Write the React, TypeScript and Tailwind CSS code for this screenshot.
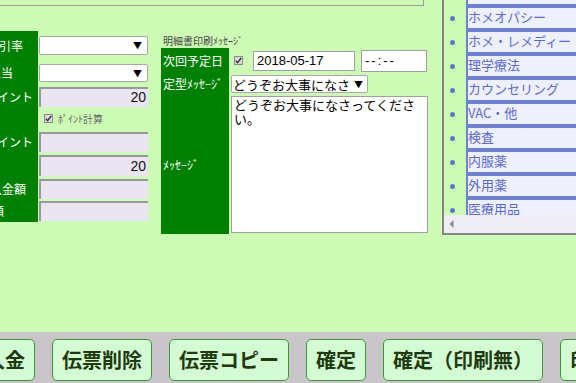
import React from 'react';

const jp = "font-['Noto_Sans_CJK_JP',sans-serif]";
const latin = "font-['Liberation_Sans','Noto_Sans_CJK_JP',sans-serif]";

function Check() {
  return (
    <span className="w-[9px] h-[9px] border border-[#8c8c8c] bg-[#d8d8d8] flex items-center justify-center shrink-0">
      <svg width="7" height="7" viewBox="0 0 7 7">
        <path d="M0.8 3.6 L2.6 5.6 L6.2 1" fill="none" stroke="#333" strokeWidth="1.4" />
      </svg>
    </span>
  );
}

function Select({ h }: { h: string }) {
  return (
    <div className={`${h} w-full bg-white border border-[#a8a8a8] rounded-[2px] flex items-center justify-end pr-[5px]`}>
      <span className="text-[9px] text-black leading-none">▼</span>
    </div>
  );
}

function Field({ h, value }: { h: string; value?: string }) {
  return (
    <div className={`${h} w-full bg-[#ebe4f2] border-t-2 border-l-2 border-[#999] flex items-center justify-end pr-[2px] text-[14px] text-[#111] ${latin}`}>
      {value}
    </div>
  );
}

function LeftRow({ h, label, pr, children }: { h: string; label?: string; pr?: string; children: React.ReactNode }) {
  return (
    <div className={`${h} flex`}>
      <div className={`w-[60px] bg-[#008000] flex items-center justify-end whitespace-nowrap overflow-hidden text-[12px] text-white ${pr ?? ''}`}>
        {label}
      </div>
      <div className="w-[109px] ml-[1px] flex items-center">{children}</div>
    </div>
  );
}

function LeftForm() {
  return (
    <div className="mt-[25px] -ml-[22px] flex flex-col">
      <LeftRow h="h-[29px]" label="割引率" pr="pr-[15px]"><Select h="h-[19px]" /></LeftRow>
      <LeftRow h="h-[26px]" label="担当" pr="pr-[25px]"><Select h="h-[18px]" /></LeftRow>
      <LeftRow h="h-[21px]" label="ポイント" pr="pr-[5px]"><Field h="h-[20px]" value="20" /></LeftRow>
      <LeftRow h="h-[23px]">
        <div className="flex items-center ml-[5px] gap-[5px]">
          <Check />
          <span className="text-[10px] text-[#666]">ﾎﾟｲﾝﾄ計算</span>
        </div>
      </LeftRow>
      <LeftRow h="h-[23px]" label="ポイント" pr="pr-[5px]"><Field h="h-[20px]" /></LeftRow>
      <LeftRow h="h-[24px]"><Field h="h-[21px]" value="20" /></LeftRow>
      <LeftRow h="h-[23px]" label="入金額" pr="pr-[12px]"><Field h="h-[20px]" /></LeftRow>
      <LeftRow h="h-[22px]" label="残額" pr="pr-[34px]"><Field h="h-[20px]" /></LeftRow>
    </div>
  );
}

function MidRow({ h, label, children }: { h: string; label?: string; children: React.ReactNode }) {
  return (
    <div className={`${h} flex`}>
      <div className="w-[68px] bg-[#008000] flex items-center pl-[2px] text-[12px] text-white whitespace-nowrap">{label}</div>
      <div className="flex-1 ml-[2px] flex items-center">{children}</div>
    </div>
  );
}

function MiddleForm() {
  return (
    <div className="ml-[13px] mt-[27px] w-[267px] flex flex-col">
      <div className="h-[15px] leading-[15px] pl-[2px] text-[10px] text-[#444]">明細書印刷ﾒｯｾｰｼﾞ</div>
      <MidRow h="h-[25px]" label="次回予定日">
        <div className="ml-[3px]"><Check /></div>
        <div className={`ml-[10px] w-[102px] h-[20px] bg-white border border-[#a0a0a0] flex items-center pl-[3px] text-[13px] text-black ${latin}`}>2018-05-17</div>
        <div className={`ml-[6px] w-[66px] h-[22px] bg-white border border-[#a0a0a0] flex items-center pl-[3px] text-[13px] tracking-[2px] text-black ${latin}`}>--:--</div>
      </MidRow>
      <MidRow h="h-[22px]" label="定型ﾒｯｾｰｼﾞ">
        <div className="w-[137px] h-[18px] bg-white border border-[#a8a8a8] rounded-[2px] flex items-center pl-[1px] pr-[4px]">
          <span className="w-[118px] overflow-hidden whitespace-nowrap text-[13px] leading-none text-black">どうぞお大事になさってください。</span>
          <span className="text-[9px] leading-none text-black ml-auto">▼</span>
        </div>
      </MidRow>
      <MidRow h="h-[139px]" label="ﾒｯｾｰｼﾞ">
        <div className="w-[197px] h-[137px] bg-white border border-[#a0a0a0] px-[2px] pt-[1px] text-[13px] leading-[14px] text-black break-all">
          どうぞお大事になさってください。
        </div>
      </MidRow>
    </div>
  );
}

const items = ['ホメオパシー', 'ホメ・レメディー', '理学療法', 'カウンセリング', 'VAC・他', '検査', '内服薬', '外用薬', '医療用品'];

function RightPanel() {
  return (
    <div className="flex-1 h-[235px] border-l-2 border-b-2 border-[#8a8484] flex flex-col">
      <div className="h-[215px] overflow-hidden flex flex-col">
        <div className="h-[4px] flex shrink-0">
          <div className="w-[22px]" />
          <div className="flex-1 border-l-2 border-[#6b82d6] bg-[#eef0fc]" />
        </div>
        {items.map((t) => (
          <div key={t} className="h-[24px] flex shrink-0">
            <div className="w-[22px] pt-[4px] flex items-center pl-[6px]">
              <span className="w-[5px] h-[5px] rounded-full bg-[#5b78d2]" />
            </div>
            <div className="flex-1 border-l-2 border-t-4 border-[#6b82d6] bg-[#eef0fc] text-[13px] leading-[18px] text-[#5b6ad2] whitespace-nowrap">
              {t}
            </div>
          </div>
        ))}
      </div>
      <div className="h-[18px] bg-[#eeedf3] flex items-center pl-[5px]">
        <svg width="5" height="8" viewBox="0 0 5 8">
          <path d="M4.5 0 L0.5 4 L4.5 8 Z" fill="#8a8a8a" />
        </svg>
      </div>
    </div>
  );
}

const buttons = ['入金', '伝票削除', '伝票コピー', '確定', '確定（印刷無）', '印刷'];

export default function App() {
  return (
    <div className={`w-[576px] h-[383px] overflow-hidden bg-[#cdfab4] flex flex-col ${jp}`}>
      <div className="flex h-[332px] shrink-0">
        <div className="w-[442px] flex flex-col shrink-0">
          <div className="h-[6px] w-[424px] border-b border-r border-[#9a9a9a]" />
          <div className="flex">
            <LeftForm />
            <MiddleForm />
          </div>
        </div>
        <RightPanel />
      </div>
      <div className="h-[51px] bg-[#c9c5c9] flex gap-[17px] pt-[7px] -ml-[25px]">
        {buttons.map((b) => (
          <div key={b} className="h-[42px] shrink-0 px-[9px] border border-[#3a9a3a] rounded-[5px] bg-[#d4fcd4] flex items-center text-[20px] font-bold leading-none text-[#1f3a0f] whitespace-nowrap">
            {b}
          </div>
        ))}
      </div>
    </div>
  );
}
